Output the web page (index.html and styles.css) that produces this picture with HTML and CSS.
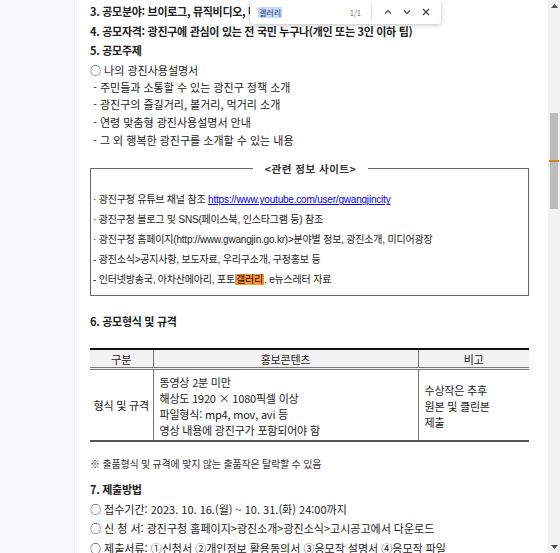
FILE: index.html
```html
<!DOCTYPE html>
<html lang="ko">
<head>
<meta charset="utf-8">
<link rel="stylesheet" href="styles.css">
</head>
<body>
<div class="viewport">
  <div class="gutter"></div>
  <main class="page">
    <p class="h">3. 공모분야: 브이로그, 뮤직비디오, 다큐멘터리, 애니메이션 등</p>
    <p class="h">4. 공모자격: 광진구에 관심이 있는 전 국민 누구나(개인 또는 3인 이하 팀)</p>
    <p class="h">5. 공모주제</p>
    <p class="li">○ 나의 광진사용설명서</p>
    <p class="sub">- 주민들과 소통할 수 있는 광진구 정책 소개</p>
    <p class="sub">- 광진구의 즐길거리, 볼거리, 먹거리 소개</p>
    <p class="sub">- 연령 맞춤형 광진사용설명서 안내</p>
    <p class="sub">- 그 외 행복한 광진구를 소개할 수 있는 내용</p>

    <fieldset class="box">
      <legend class="box-title">&lt;관련 정보 사이트&gt;</legend>
      <p class="bx">· 광진구청 유튜브 채널 참조 <a class="link" href="#">https://www.youtube.com/user/gwangjincity</a></p>
      <p class="bx">· 광진구청 블로그 및 SNS(페이스북, 인스타그램 등) 참조</p>
      <p class="bx">· 광진구청 홈페이지(http://www.gwangjin.go.kr)&gt;분야별 정보, 광진소개, 미디어광장</p>
      <p class="bx">- 광진소식&gt;공지사항, 보도자료, 우리구소개, 구정홍보 등</p>
      <p class="bx">- 인터넷방송국, 아차산메아리, 포토<mark class="hit">갤러리</mark>, e뉴스레터 자료</p>
    </fieldset>

    <p class="h h6">6. 공모형식 및 규격</p>
    <table class="spec">
      <thead>
        <tr><th class="c1">구분</th><th class="c2">홍보콘텐츠</th><th class="c3">비고</th></tr>
      </thead>
      <tbody>
        <tr>
          <td class="c1 mid">형식 및 규격</td>
          <td class="c2">
            <div class="cl">동영상 2분 미만</div>
            <div class="cl">해상도 1920 × 1080픽셀 이상</div>
            <div class="cl">파일형식: mp4, mov, avi 등</div>
            <div class="cl">영상 내용에 광진구가 포함되어야 함</div>
          </td>
          <td class="c3">
            <div class="cl">수상작은 추후</div>
            <div class="cl">원본 및 클린본</div>
            <div class="cl">제출</div>
          </td>
        </tr>
      </tbody>
    </table>

    <p class="note">※ 출품형식 및 규격에 맞지 않는 출품작은 탈락할 수 있음</p>
    <p class="h h7">7. 제출방법</p>
    <p class="li2">○ 접수기간: 2023. 10. 16.(월) ~ 10. 31.(화) 24:00까지</p>
    <p class="li2">○ 신 청 서: 광진구청 홈페이지&gt;광진소개&gt;광진소식&gt;고시공고에서 다운로드</p>
    <p class="li2">○ 제출서류: ①신청서 ②개인정보 활용동의서 ③응모작 설명서 ④응모작 파일</p>
  </main>
  <div class="scrollbar">
    <div class="sb-btn"><svg width="7" height="4" viewBox="0 0 7 4"><path d="M0 4 L3.5 0 L7 4 Z" fill="#505050"/></svg></div>
    <div class="sb-track">
      <div class="sb-space-top"></div>
      <div class="sb-thumb"><div class="sb-mark"></div></div>
    </div>
    <div class="sb-btn"><svg width="7" height="4" viewBox="0 0 7 4"><path d="M0 0 L3.5 4 L7 0 Z" fill="#505050"/></svg></div>
  </div>

  <div class="findbar">
    <span class="find-input"><span class="find-sel">갤러리</span></span>
    <span class="find-count">1/1</span>
    <span class="find-sep"></span>
    <span class="find-btn"><svg width="10" height="10" viewBox="0 0 10 10"><path d="M2 6.5 L5 3.5 L8 6.5" fill="none" stroke="#444" stroke-width="1.2"/></svg></span>
    <span class="find-btn"><svg width="10" height="10" viewBox="0 0 10 10"><path d="M2 3.5 L5 6.5 L8 3.5" fill="none" stroke="#444" stroke-width="1.2"/></svg></span>
    <span class="find-btn"><svg width="10" height="10" viewBox="0 0 10 10"><path d="M2 2 L8 8 M8 2 L2 8" fill="none" stroke="#444" stroke-width="1.3"/></svg></span>
  </div>
</div>
</body>
</html>
```
FILE: styles.css
```css
* { box-sizing: border-box; }
html, body { margin: 0; padding: 0; }
body {
  width: 560px;
  height: 553px;
  overflow: hidden;
  font-family: "Noto Sans CJK KR", "Noto Sans", sans-serif;
  font-size: 11px;
  color: #222;
  background: #fff;
}
.viewport {
  position: relative;
  display: flex;
  width: 560px;
  height: 553px;
  overflow: hidden;
}
.gutter {
  width: 75px;
  flex: none;
  background: #f8f9fa;
  border-right: 1px solid #eef0f2;
}
.page {
  flex: 1;
  padding: 2px 0 0 15px;
  overflow: hidden;
}
.page p { margin: 0; white-space: nowrap; }
.h { font-weight: 700; line-height: 19.5px; letter-spacing: -0.3px; }
.li { line-height: 18px; }
.sub { line-height: 17.7px; padding-left: 3px; }

.box {
  width: 439px;
  margin: 12px 0 0 0;
  padding: 14px 0 6px 2px;
  border: 1px solid #666;
  min-width: 0;
}
.box-title {
  margin: 0 auto;
  padding: 0 12px;
  font-weight: 700;
  font-size: 10.5px;
  letter-spacing: 0.5px;
  color: #333;
}
.bx {
  line-height: 19.8px;
  font-family: "Liberation Sans", "Noto Sans CJK KR", sans-serif;
  font-size: 10px;
  letter-spacing: -0.2px;
}
.link { color: #0000ee; text-decoration: underline; }
.hit { background: #ff9632; color: #111; padding: 0 1px; }

.h6 { margin-top: 16px !important; }
.spec {
  width: 439px;
  margin-top: 16px;
  border-collapse: collapse;
  border-top: 2px solid #111;
  border-bottom: 2px solid #555;
  letter-spacing: -0.2px;
}
.spec th {
  background: #f2f2f2;
  font-weight: 400;
  height: 20px;
  padding: 0;
  border-bottom: 3px double #777;
  text-align: center;
}
.spec td { padding: 4px 6px 2px; vertical-align: middle; }
.spec .c1 { width: 63px; border-right: 1px solid #777; text-align: center; }
.spec .c2 { width: 265px; border-right: 1px solid #777; }
.spec .c3 { width: auto; }
.spec .mid { padding: 0; }
.cl { line-height: 16px; }

.note { margin-top: 13px !important; line-height: 18px; font-size: 10px; letter-spacing: -0.2px; color: #333; }
.h7 { margin-top: 7px !important; }
.li2 { line-height: 19.5px; }

.scrollbar {
  width: 12px;
  flex: none;
  display: flex;
  flex-direction: column;
  background: #f1f1f1;
}
.sb-btn { height: 12px; display: flex; align-items: center; justify-content: center; }
.sb-track { flex: 1; display: flex; flex-direction: column; align-items: center; }
.sb-space-top { height: 101px; }
.sb-thumb {
  width: 8px;
  height: 96px;
  background: #bdbdbd;
  position: relative;
}
.sb-mark {
  position: absolute;
  left: -1px; right: -1px;
  top: 47px;
  height: 2px;
  background: #d08a1c;
}

.findbar {
  position: absolute;
  left: 250px;
  top: 0;
  width: 191px;
  height: 24px;
  background: #fff;
  border-radius: 0 0 4px 4px;
  box-shadow: 0 1px 4px rgba(0,0,0,0.25);
  display: flex;
  align-items: center;
  padding: 0 6px 0 8px;
  font-size: 8px;
}
.find-input { flex: 1; }
.find-sel { background: #c9d8f5; color: #1a3d8f; padding: 0 1px; font-size: 8px; }
.find-count { color: #666; font-size: 7.5px; margin-right: 10px; }
.find-sep { width: 1px; height: 16px; background: #e0e0e0; margin-right: 6px; }
.find-btn { width: 19px; display: flex; justify-content: center; }
```
